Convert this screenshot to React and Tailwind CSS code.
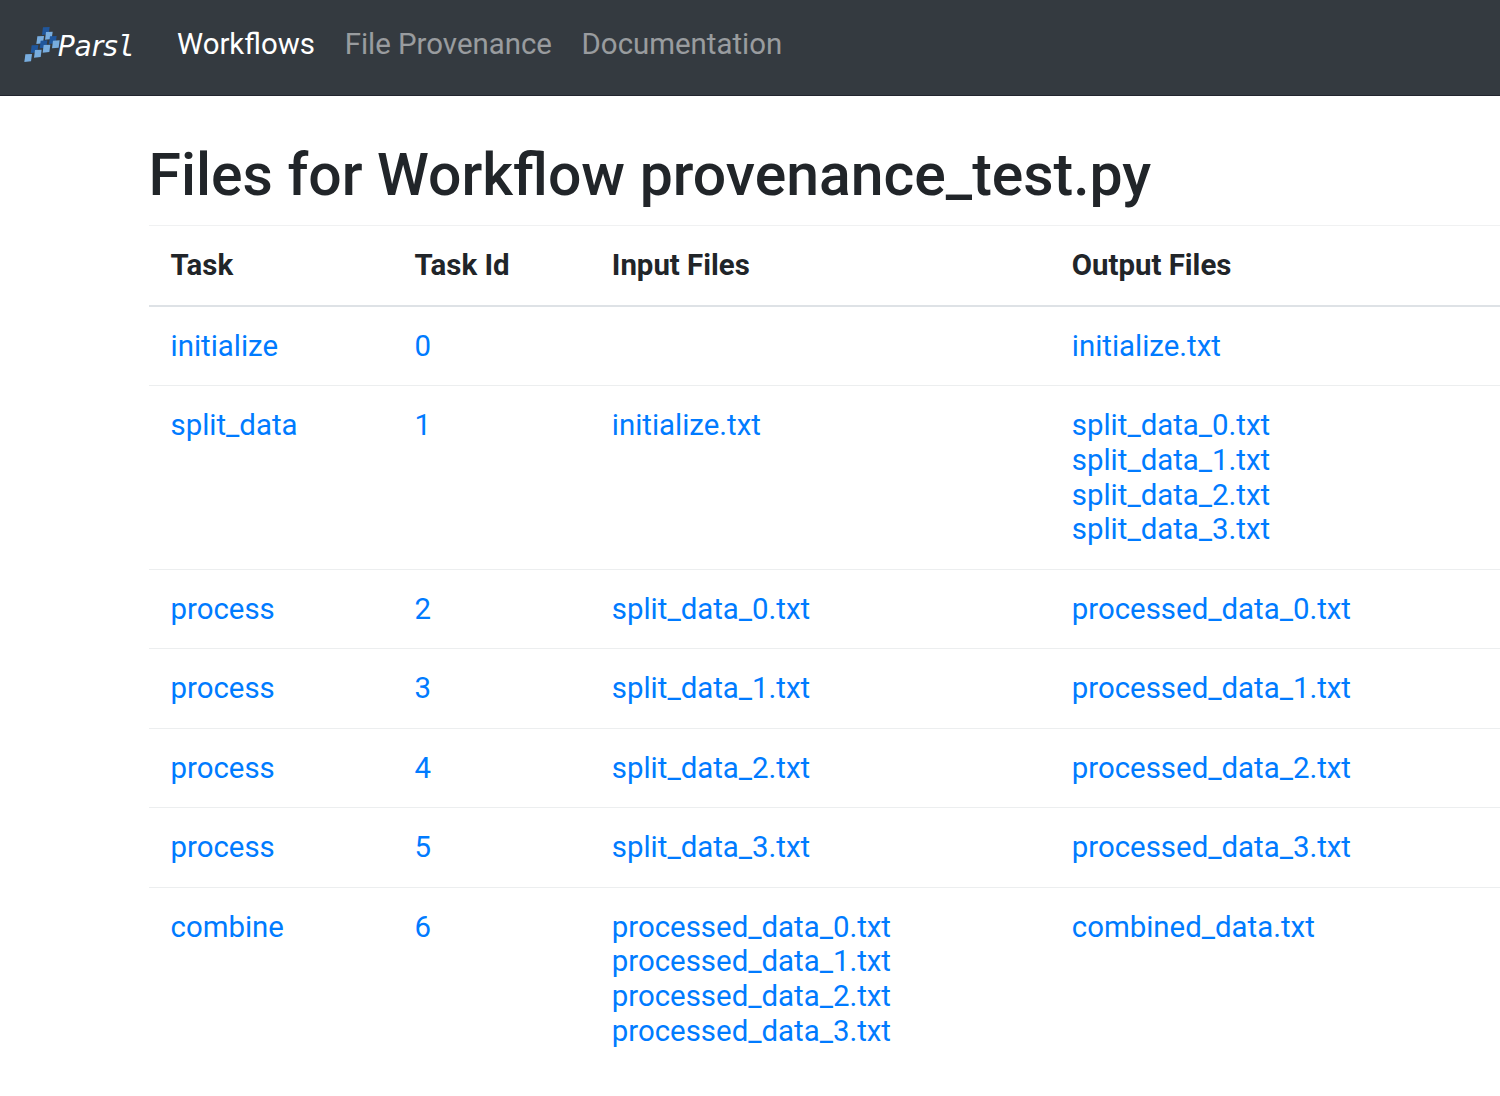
const links = [
  { label: 'Workflows', active: true },
  { label: 'File Provenance' },
  { label: 'Documentation' },
];

const rows = [
  { task: 'initialize', id: 0, inputs: [], outputs: ['initialize.txt'] },
  {
    task: 'split_data',
    id: 1,
    inputs: ['initialize.txt'],
    outputs: ['split_data_0.txt', 'split_data_1.txt', 'split_data_2.txt', 'split_data_3.txt'],
  },
  { task: 'process', id: 2, inputs: ['split_data_0.txt'], outputs: ['processed_data_0.txt'] },
  { task: 'process', id: 3, inputs: ['split_data_1.txt'], outputs: ['processed_data_1.txt'] },
  { task: 'process', id: 4, inputs: ['split_data_2.txt'], outputs: ['processed_data_2.txt'] },
  { task: 'process', id: 5, inputs: ['split_data_3.txt'], outputs: ['processed_data_3.txt'] },
  {
    task: 'combine',
    id: 6,
    inputs: ['processed_data_0.txt', 'processed_data_1.txt', 'processed_data_2.txt', 'processed_data_3.txt'],
    outputs: ['combined_data.txt'],
  },
];

const tiles = [
  [92, 33, '#20569b'],
  [101, 47, '#78addf'],
  [75, 60, '#78addf'],
  [113, 60, '#20569b'],
  [85, 73, '#20569b'],
  [122, 73, '#78addf'],
  [58, 87, '#20569b'],
  [94, 86, '#78addf'],
  [68, 101, '#78addf'],
  [39, 114, '#78addf'],
];

function Logo() {
  return (
    <svg className="h-[50px] w-[130px] shrink-0" viewBox="0 0 390 150" role="img" aria-label="Parsl">
      {tiles.map(([x, y, fill]) => (
        <path key={`${x}-${y}`} transform={`translate(${x} ${y})`} fill={fill} d="M-8 -11L12 -12L9 10L-11 12Z" />
      ))}
      <text x="128" y="109" fill="#fff" fontFamily="'DejaVu Sans', sans-serif" fontStyle="italic" fontSize="84">
        Pars<tspan fontFamily="'DejaVu Sans Mono', monospace">l</tspan>
      </text>
    </svg>
  );
}

function Files({ names }) {
  return names.map((name) => (
    <a key={name} href="#" className="block">
      {name}
    </a>
  ));
}

export default function App() {
  return (
    <div className="min-h-[1096px] overflow-hidden bg-white font-[Roboto,sans-serif] text-[29.4px] leading-[34.65px] text-[#212529]">
      <nav className="flex h-24 items-start border-b border-[#22252f] bg-[#343a40] pl-[15px] pt-5">
        <Logo />
        <div className="ml-8 flex gap-[29.7px] pt-[7px] whitespace-nowrap">
          {links.map(({ label, active }) => (
            <a key={label} href="#" className={active ? 'text-white' : 'text-white/50'}>
              {label}
            </a>
          ))}
        </div>
      </nav>
      <main className="ml-[148.5px]">
        <h1 className="pt-11 text-[58.9px] leading-[70px] font-medium whitespace-nowrap">
          Files for Workflow provenance_test.py
        </h1>
        <table className="mt-[15px] w-[1373px] table-fixed border-collapse">
          <colgroup>
            <col className="w-[244px]" />
            <col className="w-[197.3px]" />
            <col className="w-[460px]" />
            <col />
          </colgroup>
          <thead>
            <tr className="h-[80.4px] border-t border-b-2 border-t-[#f0f1f2] border-b-[#dee2e6] text-left">
              {['Task', 'Task Id', 'Input Files', 'Output Files'].map((title) => (
                <th key={title} className="px-[22px] font-bold">
                  {title}
                </th>
              ))}
            </tr>
          </thead>
          <tbody>
            {rows.map(({ task, id, inputs, outputs }) => (
              <tr key={id} className="border-b border-[#eceeef] align-top text-[#007bff] last:border-0">
                <td className="px-[22px] pt-[22px] pb-[21.8px]"><a href="#">{task}</a></td>
                <td className="px-[22px] pt-[22px] pb-[21.8px]"><a href="#">{id}</a></td>
                <td className="px-[22px] pt-[22px] pb-[21.8px]"><Files names={inputs} /></td>
                <td className="px-[22px] pt-[22px] pb-[21.8px]"><Files names={outputs} /></td>
              </tr>
            ))}
          </tbody>
        </table>
      </main>
    </div>
  );
}
